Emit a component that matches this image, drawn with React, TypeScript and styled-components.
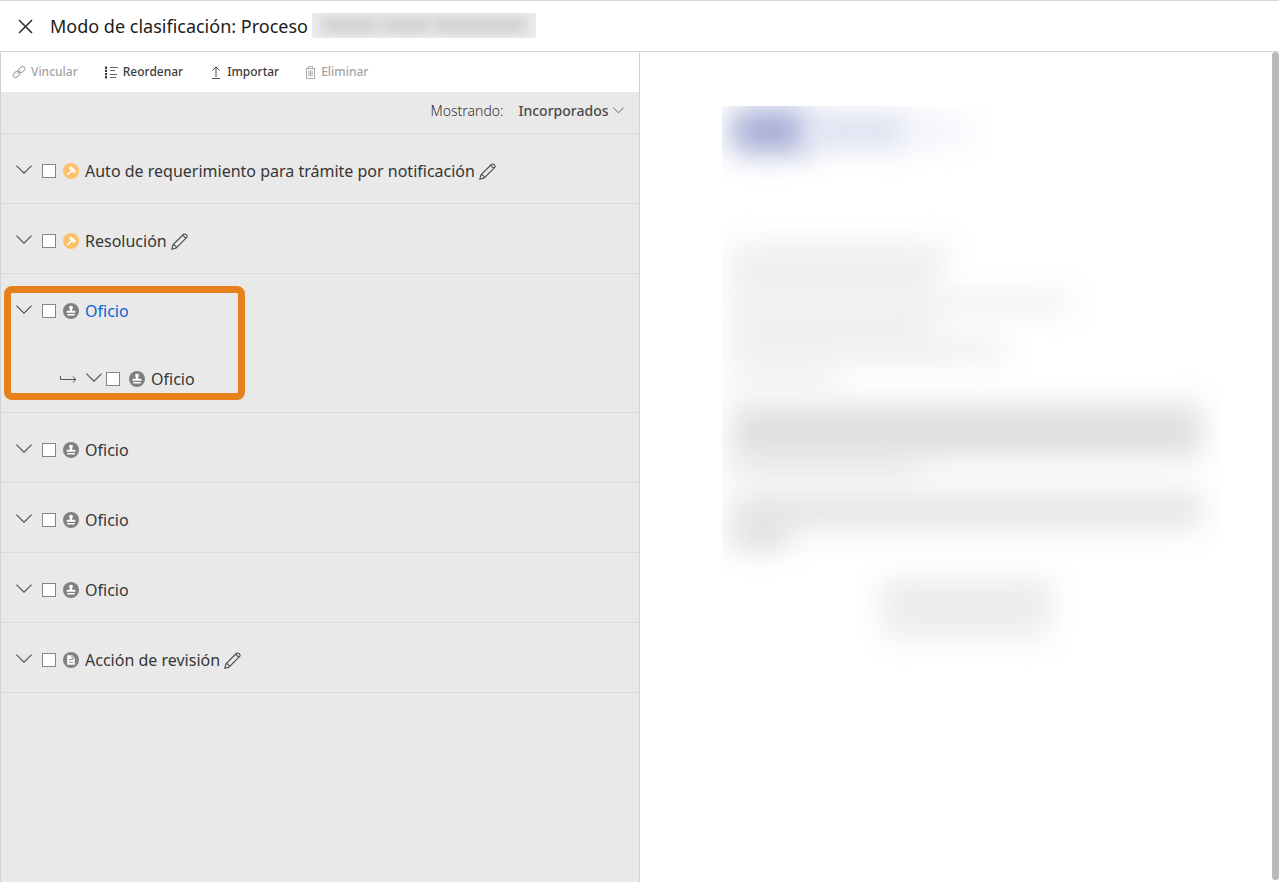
import React, { useState } from "react";
import styled, { createGlobalStyle, css } from "styled-components";

const GlobalStyle = createGlobalStyle`
  *, *::before, *::after { box-sizing: border-box; }
  body {
    margin: 0;
    background: #fff;
    color: #4a4a4a;
    font-family: "Noto Sans", "Open Sans", sans-serif;
  }
  button, select { font: inherit; color: inherit; }
`;

const Page = styled.div`
  min-height: 100vh;
  display: flex;
  flex-direction: column;
  border-top: 1px solid #d9d9dd;
`;

const TitleBar = styled.header`
  height: 51px;
  display: flex;
  align-items: center;
  padding: 0 18px;
  border-bottom: 1px solid #d2d2d4;
`;

const PlainButton = styled.button`
  display: inline-flex;
  align-items: center;
  padding: 0;
  border: 0;
  background: none;
  cursor: pointer;
`;

const CloseButton = styled(PlainButton)`
  margin-right: 17px;
  color: #2b2b2b;
`;

const Title = styled.h1`
  margin: 0;
  font-size: 18px;
  line-height: 24px;
  font-weight: 400;
  color: #1c1c1c;
  white-space: nowrap;
`;

const RedactedNumber = styled.span`
  width: 224px;
  height: 25px;
  margin: 0 0 2px 4px;
  display: flex;
  align-items: center;
  gap: 2px;
  padding: 0 8px;
  overflow: hidden;
  background: #eee;
`;

const RedactedChunk = styled.span<{ $grow: number }>`
  flex: ${(p) => p.$grow} 1 0;
  height: 14px;
  background: #cbcbcb;
  filter: blur(7px);
`;

const Body = styled.div`
  flex: 1;
  display: grid;
  grid-template-columns: 1fr 1fr;
`;

const ListPane = styled.section`
  min-width: 0;
  display: flex;
  flex-direction: column;
  background: #e9e9e9;
  border-left: 1px solid #d2d2d4;
  border-right: 1px solid #d2d2d4;
`;

const Toolbar = styled.div`
  height: 40px;
  display: flex;
  align-items: center;
  gap: 26px;
  padding: 0 11px;
  background: #fff;
`;

const ToolButton = styled(PlainButton)`
  gap: 5px;
  font-size: 12px;
  line-height: 16px;
  font-weight: 500;
  color: #3c3c3c;
  &:disabled {
    color: #a3a3a3;
    cursor: default;
  }
`;

const FilterBar = styled.div`
  height: 42px;
  display: flex;
  align-items: center;
  justify-content: flex-end;
  padding: 0 15px 4px;
  border-bottom: 1px solid #dcdcdc;
  font-size: 14px;
  line-height: 20px;
`;

const FilterLabel = styled.label`
  margin-right: 15px;
  font-weight: 300;
  color: #333;
`;

const FilterSelect = styled.select`
  appearance: none;
  field-sizing: content;
  border: 0;
  padding: 0;
  margin-right: 4px;
  background: none;
  font-weight: 500;
`;

const List = styled.ul`
  margin: 0;
  padding: 0;
  list-style: none;
`;

const ListItem = styled.li<{ $tall?: boolean }>`
  position: relative;
  height: ${(p) => (p.$tall ? 139 : 70)}px;
  padding: 26px 15px 0;
  border-bottom: 1px solid #dcdcdc;
`;

const Row = styled.div<{ $child?: boolean }>`
  display: flex;
  align-items: center;
  height: 22px;
  ${(p) =>
    p.$child &&
    css`
      margin: 46px 0 0 43px;
    `}
`;

const Expander = styled(PlainButton)<{ $tight?: boolean }>`
  margin-right: ${(p) => (p.$tight ? 4 : 10)}px;
  padding-bottom: 4px;
  color: #555;
`;

const ChildArrow = styled.span`
  display: flex;
  margin-right: 10px;
  color: #555;
`;

const CheckField = styled.label<{ $current?: boolean; $wide?: boolean }>`
  display: flex;
  align-items: center;
  font-size: 16px;
  line-height: 22px;
  font-weight: 400;
  white-space: nowrap;
  color: ${(p) => (p.$current ? "#0a64d2" : "#363636")};
  svg {
    margin: 0 6px 0 ${(p) => (p.$wide ? 9 : 7)}px;
  }
`;

const Checkbox = styled.input`
  appearance: none;
  width: 14px;
  height: 14px;
  margin: 0;
  border: 1px solid #868686;
  background: #fff;
  &:checked { background: #0f6cd6; }
`;

const EditButton = styled(PlainButton)`
  margin-left: 4px;
  color: #4a4a4a;
`;

const Highlight = styled.div`
  position: absolute;
  left: 3px;
  top: 12px;
  width: 241px;
  height: 114px;
  border: 7px solid #e5801a;
  border-radius: 8px;
  pointer-events: none;
`;

const PreviewPane = styled.section`
  min-width: 0;
  display: flex;
  background: #fff;
`;

const Document = styled.div`
  flex: 1;
  min-width: 0;
  margin: 54px 52px 0 82px;
  padding: 0 18px 0 10px;
  overflow: hidden;
`;

const Letterhead = styled.div`
  display: flex;
  align-items: center;
  height: 50px;
  margin-bottom: 90px;
`;

const Smudge = styled.div<{ $w: string; $h: number; $tone: string }>`
  width: ${(p) => p.$w};
  height: ${(p) => p.$h}px;
  background: ${(p) => p.$tone};
  filter: blur(15px);
`;

const Lines = styled.div<{ $gap: number; $after: number; $centered?: boolean }>`
  display: flex;
  flex-direction: column;
  align-items: ${(p) => (p.$centered ? "center" : "flex-start")};
  gap: ${(p) => p.$gap}px;
  margin-bottom: ${(p) => p.$after}px;
`;

const ScrollThumb = styled.div`
  width: 7px;
  margin-bottom: 2px;
  border-radius: 4px;
  background: #b9b9b9;
`;

const stroke = { fill: "none", stroke: "currentColor", "aria-hidden": true } as const;

const CloseIcon = () => (
  <svg width="15" height="15" viewBox="0 0 15 15" {...stroke} strokeWidth="1.5">
    <path d="M1 1l13 13M14 1L1 14" />
  </svg>
);

const ChevronIcon = ({ size = 16 }: { size?: number }) => (
  <svg width={size} height={size / 2 + 1} viewBox="0 0 16 9" {...stroke} strokeWidth="1.2">
    <path d="M.4.6L8 8.2 15.6.6" />
  </svg>
);

const LinkIcon = () => (
  <svg width="14" height="14" viewBox="0 0 14 14" {...stroke}>
    <rect x="6.3" y="2.2" width="7" height="4.6" rx="2.3" transform="rotate(-45 9.8 4.5)" />
    <rect x="0.9" y="7.1" width="7" height="4.6" rx="2.3" transform="rotate(-45 4.4 9.4)" />
    <path d="M5.2 8.8l3.6-3.6" />
  </svg>
);

const ReorderIcon = () => (
  <svg width="14" height="13" viewBox="0 0 14 13" {...stroke}>
    <path d="M6 1.5h8M6 4.500h5M6 8.500h7M6 11.500h6" strokeWidth=".8" />
    <path d="M2 .5v12" strokeWidth="2" strokeDasharray="2.4 .8" />
  </svg>
);

const ImportIcon = () => (
  <svg width="13" height="13" viewBox="0 0 13 13" {...stroke}>
    <path d="M7 11V1M3.600 4.400L7 1l3.400 3.400M3 12.500h8" strokeWidth=".9" />
  </svg>
);

const TrashIcon = () => (
  <svg width="11" height="13" viewBox="0 0 11 13" {...stroke}>
    <path d="M.5 2.5h10M3.5 2.5v-2h4v2M1.5 2.5v10h8v-10M3.9 4.5v6M5.5 4.5v6M7.1 4.5v6" strokeWidth=".9" />
  </svg>
);

const PencilIcon = () => (
  <svg width="17" height="17" viewBox="0 0 17 17" {...stroke} strokeWidth="1.1">
    <path d="M.8 16.200l1.200-4.400L12.300 1.500a1.800 1.800 0 0 1 2.600 0l.6.6a1.800 1.800 0 0 1 0 2.600L5.200 15zM2 11.800c1.700 0 3.200 1.500 3.200 3.200M11.600 2.200l3.200 3.200" />
  </svg>
);

const ArrowIcon = () => (
  <svg width="17" height="8" viewBox="0 0 17 8" {...stroke}>
    <path d="M1.500 1v3.500H17M14 1.500l2.700 3-2.700 3" />
  </svg>
);

type Kind = "gavel" | "stamp" | "note";

const KindIcon = ({ kind }: { kind: Kind }) => (
  <svg width="16" height="16" viewBox="0 0 16 16" aria-hidden>
    <circle cx="8" cy="8" r="8" fill={kind === "gavel" ? "#ffc06c" : "#808080"} />
    {kind === "gavel" && (
      <g fill="none" stroke="#fff">
        <path d="M7.600 4.700l4 4" strokeWidth="2.700" />
        <path d="M6.200 5.600l2.300-2.300M10.400 9.800l2.300-2.300" strokeWidth="1.100" />
        <path d="M9.300 7l-4.800 4.800" strokeWidth="1.700" />
      </g>
    )}
    {kind === "stamp" && (
      <path
        d="M8 2.700a1.800 1.800 0 0 1 1.700 2.300C9.400 6 9 6.600 9.100 7.700h2.200c.7 0 1.100.5 1.100 1.100v1H3.600v-1c0-.6.4-1.100 1.100-1.100h2.200C7 6.600 6.600 6 6.300 5A1.800 1.800 0 0 1 8 2.700zM4.300 10.900h7.400v1.500H4.300z"
        fill="#fff"
      />
    )}
    {kind === "note" && (
      <>
        <path d="M4.200 3.200h5l2.600 2.500v7.100H4.200z" fill="#fff" />
        <path d="M9 3.500v2.500h2.600M6 7.500h4.300M6 10.300h4.300" fill="none" stroke="#808080" strokeWidth=".9" />
      </>
    )}
  </svg>
);

interface Entry {
  id: string;
  label: string;
  kind: Kind;
  editable?: boolean;
  current?: boolean;
  child?: Entry;
}

const entries: Entry[] = [
  { id: "auto", label: "Auto de requerimiento para trámite por notificación", kind: "gavel", editable: true },
  { id: "resolucion", label: "Resolución", kind: "gavel", editable: true },
  {
    id: "oficio-1",
    label: "Oficio",
    kind: "stamp",
    current: true,
    child: { id: "oficio-1-1", label: "Oficio", kind: "stamp" },
  },
  { id: "oficio-2", label: "Oficio", kind: "stamp" },
  { id: "oficio-3", label: "Oficio", kind: "stamp" },
  { id: "oficio-4", label: "Oficio", kind: "stamp" },
  { id: "revision", label: "Acción de revisión", kind: "note", editable: true },
];

const EntryRow = ({ entry, child }: { entry: Entry; child?: boolean }) => (
  <Row $child={child}>
    {child && (
      <ChildArrow>
        <ArrowIcon />
      </ChildArrow>
    )}
    <Expander type="button" aria-label="Desplegar" $tight={child}>
      <ChevronIcon />
    </Expander>
    <CheckField $current={entry.current} $wide={child}>
      <Checkbox type="checkbox" name={entry.id} />
      <KindIcon kind={entry.kind} />
      {entry.label}
    </CheckField>
    {entry.editable && (
      <EditButton type="button" aria-label="Editar">
        <PencilIcon />
      </EditButton>
    )}
  </Row>
);

export default function App() {
  const [filter, setFilter] = useState("Incorporados");
  return (
    <>
      <GlobalStyle />
      <Page>
        <TitleBar>
          <CloseButton type="button" aria-label="Cerrar">
            <CloseIcon />
          </CloseButton>
          <Title>Modo de clasificación: Proceso</Title>
          <RedactedNumber>
            <RedactedChunk $grow={5} />
            <RedactedChunk $grow={4} />
            <RedactedChunk $grow={8} />
          </RedactedNumber>
        </TitleBar>
        <Body>
          <ListPane>
            <Toolbar>
              <ToolButton type="button" disabled>
                <LinkIcon />
                Vincular
              </ToolButton>
              <ToolButton type="button">
                <ReorderIcon />
                Reordenar
              </ToolButton>
              <ToolButton type="button">
                <ImportIcon />
                Importar
              </ToolButton>
              <ToolButton type="button" disabled>
                <TrashIcon />
                Eliminar
              </ToolButton>
            </Toolbar>
            <FilterBar>
              <FilterLabel htmlFor="filter">Mostrando:</FilterLabel>
              <FilterSelect id="filter" value={filter} onChange={(e) => setFilter(e.target.value)}>
                <option>Incorporados</option>
              </FilterSelect>
              <ChevronIcon size={11} />
            </FilterBar>
            <List>
              {entries.map((entry) => (
                <ListItem key={entry.id} $tall={!!entry.child}>
                  <EntryRow entry={entry} />
                  {entry.child && <EntryRow entry={entry.child} child />}
                  {entry.child && <Highlight />}
                </ListItem>
              ))}
            </List>
          </ListPane>
          <PreviewPane>
            <Document>
              <Letterhead>
                <Smudge $w="76px" $h={42} $tone="#a0a8d3" />
                <Smudge $w="100px" $h={34} $tone="#dadfef" />
                <Smudge $w="60px" $h={20} $tone="#eceff8" />
              </Letterhead>
              <Lines $gap={8} $after={22}>
                <Smudge $w="46%" $h={16} $tone="#e8e8e8" />
                <Smudge $w="43%" $h={16} $tone="#e0e0e0" />
                <Smudge $w="72%" $h={16} $tone="#eaeaea" />
                <Smudge $w="43%" $h={16} $tone="#e4e4e4" />
                <Smudge $w="58%" $h={16} $tone="#e6e6e6" />
                <Smudge $w="22%" $h={16} $tone="#eaeaea" />
              </Lines>
              <Lines $gap={0} $after={20}>
                <Smudge $w="100%" $h={54} $tone="#dfdfdf" />
                <Smudge $w="40%" $h={14} $tone="#dedede" />
              </Lines>
              <Lines $gap={0} $after={34}>
                <Smudge $w="100%" $h={36} $tone="#e4e4e4" />
                <Smudge $w="12%" $h={18} $tone="#cfcfcf" />
              </Lines>
              <Lines $gap={4} $after={40} $centered>
                <Smudge $w="36%" $h={16} $tone="#e8e8e8" />
                <Smudge $w="35%" $h={16} $tone="#dcdcdc" />
                <Smudge $w="34%" $h={16} $tone="#e6e6e6" />
              </Lines>
            </Document>
            <ScrollThumb />
          </PreviewPane>
        </Body>
      </Page>
    </>
  );
}
